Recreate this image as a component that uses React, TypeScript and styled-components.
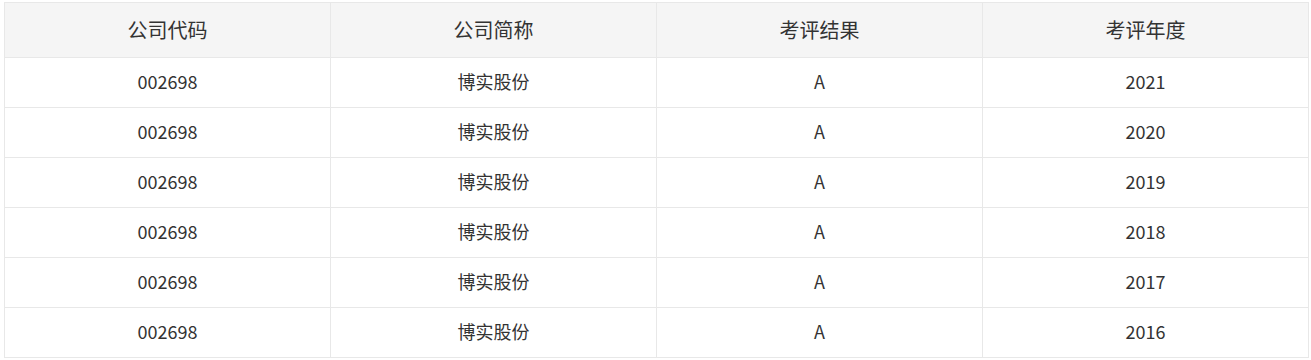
import React from "react";
import styled, { createGlobalStyle } from "styled-components";

const GlobalStyle = createGlobalStyle`
  html, body { margin: 0; padding: 0; background: #ffffff; }
  body {
    font-family: "Microsoft YaHei", "Noto Sans CJK SC", "Noto Sans", sans-serif;
    color: #333333;
  }
`;

const Page = styled.div`
  padding: 2px 0 0 4px;
`;

const Table = styled.div`
  display: grid;
  grid-template-columns: repeat(4, 326px);
  border-top: 1px solid #e8e8e8;
  border-left: 1px solid #e8e8e8;
  width: max-content;
`;

const Cell = styled.div<{ $head?: boolean }>`
  display: flex;
  align-items: center;
  justify-content: center;
  box-sizing: border-box;
  height: ${(p) => (p.$head ? 55 : 50)}px;
  padding-bottom: ${(p) => (p.$head ? 1 : 3)}px;
  border-right: 1px solid #e8e8e8;
  border-bottom: 1px solid #e8e8e8;
  background: ${(p) => (p.$head ? "#f5f5f5" : "#ffffff")};
  font-size: ${(p) => (p.$head ? 20 : 18)}px;
  font-weight: 400;
  color: #333333;
`;

const headers = ["公司代码", "公司简称", "考评结果", "考评年度"];
const years = ["2021", "2020", "2019", "2018", "2017", "2016"];

export default function App() {
  return (
    <>
      <GlobalStyle />
      <Page>
        <Table>
          {headers.map((h) => (
            <Cell key={h} $head>
              {h}
            </Cell>
          ))}
          {years.map((y) => (
            <React.Fragment key={y}>
              <Cell>002698</Cell>
              <Cell>博实股份</Cell>
              <Cell>A</Cell>
              <Cell>{y}</Cell>
            </React.Fragment>
          ))}
        </Table>
      </Page>
    </>
  );
}
